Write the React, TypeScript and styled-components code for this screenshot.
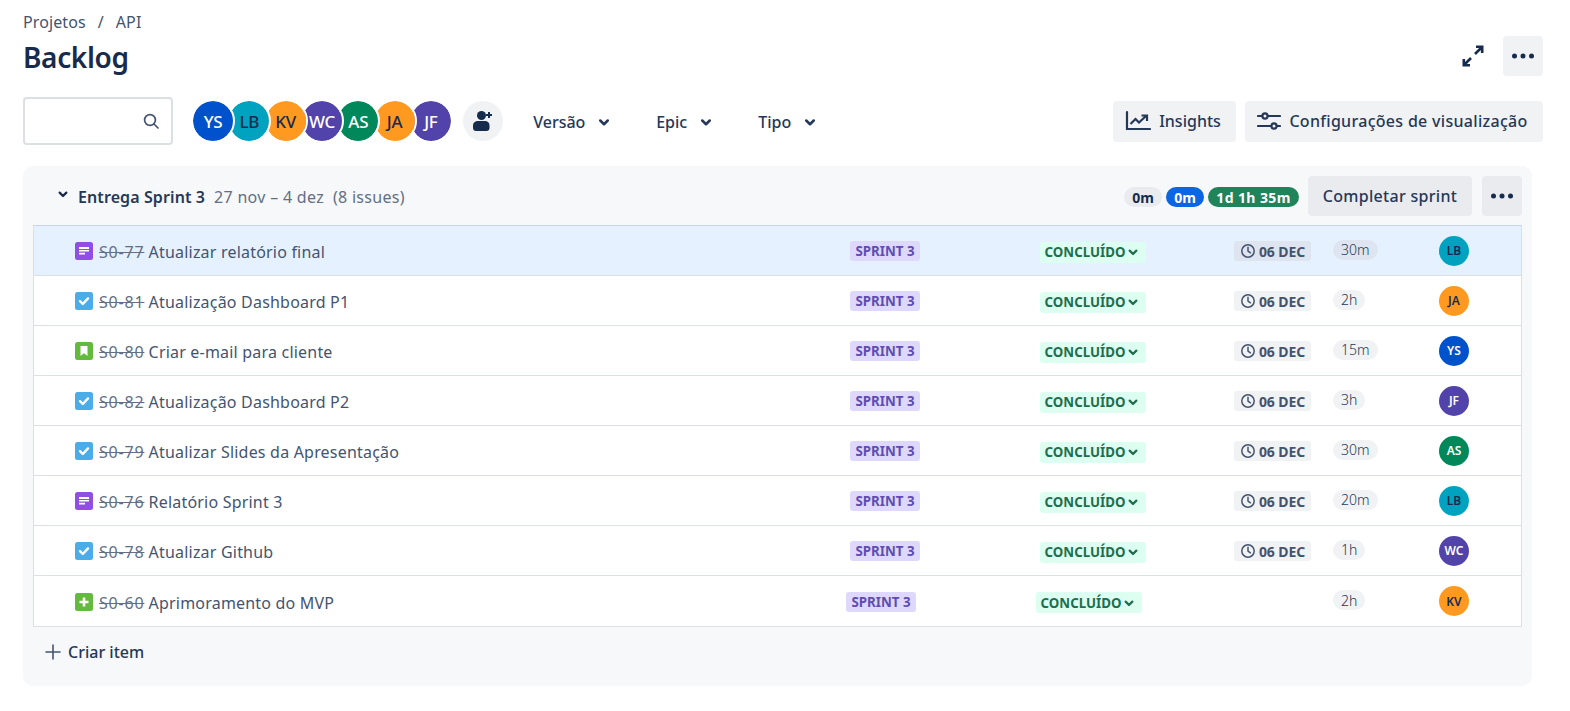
import React from 'react';
import styled, { createGlobalStyle } from 'styled-components';

const Global = createGlobalStyle`
  html, body { margin: 0; padding: 0; background: #fff; }
  body { font-family: "Noto Sans", "Open Sans", "Liberation Sans", sans-serif; color: #172b4d; }
  * { box-sizing: border-box; }
`;

const Page = styled.div`
  width: 1570px; height: 711px; padding: 12px 27px 0 23px; overflow: hidden;
`;
const Crumbs = styled.div`
  display: flex; gap: 12px; height: 20px; align-items: center;
  font-size: 16px; line-height: 20px; letter-spacing: 0.1px; color: #44546f;
`;
const TitleRow = styled.div`
  display: flex; align-items: center; justify-content: space-between; height: 40px; margin-top: 4px;
`;
const Title = styled.h1`
  margin: 1px 0 0; font-size: 28px; font-weight: 600; line-height: 40px; letter-spacing: -0.35px; color: #172b4d;
`;
const TitleActions = styled.div`
  display: flex; align-items: center; gap: 15px;
`;
const PlainIcon = styled.div`
  width: 30px; height: 40px; display: flex; align-items: center; justify-content: center;
`;
const SquareButton = styled.button<{ $dark?: boolean }>`
  width: 40px; height: 40px; border: 0; border-radius: 4px; padding: 0;
  background: ${p => (p.$dark ? '#e9ebef' : '#f1f2f4')};
  display: flex; align-items: center; justify-content: center;
`;
const Toolbar = styled.div`
  display: flex; align-items: center; height: 48px; margin-top: 21px;
`;
const Search = styled.div`
  width: 150px; height: 48px; border: 2px solid #dcdfe4; border-radius: 4px;
  display: flex; align-items: center; justify-content: flex-end; padding-right: 11px; background: #fff;
`;
const Faces = styled.div`
  display: flex; margin-left: 18px;
`;
const Face = styled.div<{ $bg: string; $fg: string; $z: number }>`
  position: relative; z-index: ${p => p.$z};
  width: 44px; height: 44px; flex: none; border-radius: 50%; border: 2px solid #fff; margin-right: -7.7px;
  background: ${p => p.$bg}; background-clip: padding-box; color: ${p => p.$fg};
  display: flex; align-items: center; justify-content: center;
  font-size: 17px; font-weight: 500; letter-spacing: -0.3px;
`;
const AddUser = styled.div`
  width: 40px; height: 40px; border-radius: 50%; background: #f1f2f4; margin-left: 18px;
  display: flex; align-items: center; justify-content: center;
`;
const Filter = styled.div<{ $w: number }>`
  width: ${p => p.$w}px; display: flex; align-items: center; gap: 10px; padding-top: 2px;
  font-size: 16px; font-weight: 500; color: #253858;
`;
const Filters = styled.div`
  display: flex; margin-left: 30px;
`;
const ToolbarEnd = styled.div`
  margin-left: auto; display: flex; gap: 9px;
`;
const TextButton = styled.button<{ $w: number; $spread?: boolean }>`
  width: ${p => p.$w}px; height: 41px; border: 0; border-radius: 4px; background: #f1f2f4;
  display: flex; align-items: center; justify-content: center; gap: 8px; padding: 0 3px 0 0;
  font-family: inherit; font-size: 16px; font-weight: 500; color: #253858; white-space: nowrap;
  letter-spacing: ${p => (p.$spread ? '0.3px' : '0')};
`;
const Sprint = styled.section`
  width: 1509px; height: 520px; margin-top: 21px; background: #f7f8f9; border-radius: 10px;
  padding: 0 10px;
`;
const SprintHead = styled.div`
  height: 59px; display: flex; align-items: center; padding-left: 22px;
`;
const HeadChevron = styled.span`
  display: flex; margin-top: -4px; color: #172b4d;
`;
const SprintName = styled.span`
  font-size: 16px; font-weight: 600; color: #253858; margin: 2px 0 0 7px; letter-spacing: 0.1px;
`;
const SprintMeta = styled.span`
  font-size: 16px; color: #626f86; margin: 2px 0 0 9px; white-space: pre; letter-spacing: 0.3px;
`;
const HeadEnd = styled.div`
  margin-left: auto; display: flex; align-items: center; gap: 10px;
`;
const Pills = styled.div`
  display: flex; gap: 4px; align-items: center; padding-top: 3px; margin-right: -1px;
`;
const Pill = styled.span<{ $bg: string; $fg: string; $wide?: boolean }>`
  height: 20px; min-width: 38px; width: ${p => (p.$wide ? '91px' : '38px')}; border-radius: 10px; background: ${p => p.$bg}; color: ${p => p.$fg};
  display: flex; align-items: center; justify-content: center;
  font-size: 14px; font-weight: 700; white-space: nowrap; letter-spacing: ${p => (p.$wide ? '0.4px' : '0')};
`;
const CompleteButton = styled.button`
  width: 164px; height: 40px; border: 0; border-radius: 4px; background: #e9ebef; padding: 0;
  font-family: inherit; font-size: 16px; font-weight: 500; color: #253858; letter-spacing: 0.3px;
`;
const Table = styled.div`
  border: 1px solid #dcdfe4; border-top-color: #c9d5e6; background: #fff;
`;
const Row = styled.div<{ $active?: boolean }>`
  height: 50px;
  display: grid; align-items: center;
  grid-template-columns: 775px 190px 194px 99px 106px 30px;
  padding-left: 41px;
  background: ${p => (p.$active ? '#e6f1ff' : '#fff')};
  border-bottom: 1px solid #dcdfe4;
  &:last-child { border-bottom: 0; }
`;
const Summary = styled.div`
  display: flex; align-items: center; gap: 6px; font-size: 16px; color: #44546f; white-space: pre; padding-top: 1px;
`;
const SummaryText = styled.span`
  position: relative; top: 1px;
`;
const Key = styled.s`
  color: #626f86; letter-spacing: 0.8px;
`;
const Name = styled.span`
  color: #44546f; letter-spacing: 0.2px;
`;
const SprintTag = styled.span<{ $shift?: boolean }>`
  width: 70px; height: 20px; border-radius: 3px; background: #dfd8fd; color: #5e4db2; margin-top: 1px;
  display: flex; align-items: center; justify-content: center;
  font-size: 13.3px; font-weight: 700; white-space: nowrap;
  margin-left: ${p => (p.$shift ? '-4px' : '0')};
`;
const Status = styled.span<{ $shift?: boolean }>`
  width: 106px; height: 21px; margin-top: 3px; border-radius: 3px; background: #dcfff1; color: #216e4e;
  display: flex; align-items: center; justify-content: center; gap: 0;
  font-size: 13.3px; font-weight: 700; white-space: nowrap;
  margin-left: ${p => (p.$shift ? '-4px' : '0')};
`;
const DateTag = styled.span<{ $active?: boolean }>`
  width: 77px; height: 20px; margin-top: 1px; border-radius: 3px; background: ${p => (p.$active ? '#dfe5f0' : '#f1f2f4')}; color: #44546f;
  display: flex; align-items: center; justify-content: center; gap: 3px;
  font-size: 14px; font-weight: 700; white-space: nowrap; letter-spacing: -0.1px;
`;
const Estimate = styled.span<{ $active?: boolean }>`
  justify-self: start; height: 20px; padding: 0 8px; margin-top: -2px; border-radius: 10px; background: ${p => (p.$active ? '#dfe5f0' : '#f1f2f4')}; color: #253858;
  display: flex; align-items: center; font-size: 14px; font-weight: 300; white-space: nowrap;
`;
const Assignee = styled.div<{ $bg: string; $fg: string }>`
  width: 30px; height: 30px; border-radius: 50%; background: ${p => p.$bg}; color: ${p => p.$fg};
  display: flex; align-items: center; justify-content: center; font-size: 12px; font-weight: 600;
`;
const CreateItem = styled.div`
  height: 50px; display: flex; align-items: center; gap: 7px; padding-left: 12px;
  font-size: 16px; font-weight: 500; color: #253858;
`;

const Chevron = ({ size = 18 }: { size?: number }) => (
  <svg width={size} height={size} viewBox="0 0 24 24" fill="none">
    <path d="M7 10l5 5 5-5" stroke="currentColor" strokeWidth="3.4" strokeLinecap="round" strokeLinejoin="round" />
  </svg>
);
const Dots = () => (
  <svg width="24" height="24" viewBox="0 0 24 24" fill="#172b4d">
    <circle cx="3.5" cy="12" r="2.5" /><circle cx="12" cy="12" r="2.5" /><circle cx="20.5" cy="12" r="2.5" />
  </svg>
);
const Expand = () => (
  <svg width="24" height="24" viewBox="0 0 24 24" fill="none" stroke="#172b4d" strokeWidth="2.6">
    <path d="M14 10l7-7M15 2.8h6.2V9M10 14l-7 7M2.8 15v6.2H9" />
  </svg>
);
const SearchIcon = () => (
  <svg width="18" height="18" viewBox="0 0 18 18" fill="none" stroke="#44546f" strokeWidth="1.7">
    <circle cx="8" cy="8" r="5.4" /><path d="M12 12l4 4" strokeLinecap="round" />
  </svg>
);
const AddUserIcon = () => (
  <svg width="24" height="24" viewBox="0 0 24 24" fill="#172b4d">
    <circle cx="10.5" cy="6.5" r="4.5" />
    <path d="M2 16.5c0-3 2.4-4.5 5-4.5h7c2.6 0 4.5 1.5 4.5 4.5V19c0 1.7-1.3 3-3 3H5c-1.7 0-3-1.3-3-3z" />
    <path d="M18 3v6M15 6h6" stroke="#172b4d" strokeWidth="2" />
  </svg>
);
const InsightsIcon = () => (
  <svg width="26" height="22" viewBox="0 0 26 22" fill="none" stroke="#253858" strokeWidth="2.2">
    <path d="M2 2v17h23" strokeLinecap="round" />
    <path d="M5.5 14l5-5 3.5 3.5 7-6.5M16.5 5.5H22V11" />
  </svg>
);
const SlidersIcon = () => (
  <svg width="24" height="20" viewBox="0 0 24 20" fill="none" stroke="#253858" strokeWidth="2.2">
    <path d="M1 5h4M11 5h12M1 15h13M20 15h3" strokeLinecap="round" />
    <circle cx="8" cy="5" r="2.6" /><circle cx="17" cy="15" r="2.6" />
  </svg>
);
const Clock = () => (
  <svg width="16" height="16" viewBox="0 0 16 16" fill="none" stroke="#44546f" strokeWidth="1.5">
    <circle cx="8" cy="8" r="6.2" /><path d="M8 4.2V8l2.4 1.8" strokeLinecap="round" />
  </svg>
);
const Plus = () => (
  <svg width="16" height="16" viewBox="0 0 16 16" stroke="#44546f" strokeWidth="1.6" strokeLinecap="round">
    <path d="M8 1v14M1 8h14" />
  </svg>
);

type Kind = 'note' | 'task' | 'story' | 'plus';
const kindBg: Record<Kind, string> = { note: '#904ee2', task: '#4bade8', story: '#63ba3c', plus: '#63ba3c' };
const TypeIcon = ({ kind }: { kind: Kind }) => (
  <svg width="18" height="18" viewBox="0 0 18 18">
    <rect width="18" height="18" rx="2.5" fill={kindBg[kind]} />
    {kind === 'note' && <path d="M4 5h10v2H4zM4 8h10v1.6H4zM4 10.8h6v1.6H4z" fill="#fff" />}
    {kind === 'task' && <path d="M5 9.2l2.8 2.8L13 6.4" fill="none" stroke="#fff" strokeWidth="2.4" strokeLinecap="round" strokeLinejoin="round" />}
    {kind === 'story' && <path d="M5.5 4h7v10L9 11.3 5.5 14z" fill="#fff" />}
    {kind === 'plus' && <path d="M9 4.5v9M4.5 9h9" fill="none" stroke="#fff" strokeWidth="2.6" />}
  </svg>
);

const people: Record<string, { bg: string; fg: string }> = {
  YS: { bg: '#0052cc', fg: '#fff' },
  LB: { bg: '#00a3bf', fg: '#172b4d' },
  KV: { bg: '#ff991f', fg: '#172b4d' },
  WC: { bg: '#5243aa', fg: '#fff' },
  AS: { bg: '#00875a', fg: '#fff' },
  JA: { bg: '#ff991f', fg: '#172b4d' },
  JF: { bg: '#5243aa', fg: '#fff' },
};

const issues: { kind: Kind; id: string; name: string; est: string; who: string; noDate?: boolean }[] = [
  { kind: 'note', id: 'S0-77', name: 'Atualizar relatório final', est: '30m', who: 'LB' },
  { kind: 'task', id: 'S0-81', name: 'Atualização Dashboard P1', est: '2h', who: 'JA' },
  { kind: 'story', id: 'S0-80', name: 'Criar e-mail para cliente', est: '15m', who: 'YS' },
  { kind: 'task', id: 'S0-82', name: 'Atualização Dashboard P2', est: '3h', who: 'JF' },
  { kind: 'task', id: 'S0-79', name: 'Atualizar Slides da Apresentação', est: '30m', who: 'AS' },
  { kind: 'note', id: 'S0-76', name: 'Relatório Sprint 3', est: '20m', who: 'LB' },
  { kind: 'task', id: 'S0-78', name: 'Atualizar Github', est: '1h', who: 'WC' },
  { kind: 'plus', id: 'S0-60', name: 'Aprimoramento do MVP', est: '2h', who: 'KV', noDate: true },
];

export default function App() {
  return (
    <Page>
      <Global />
      <Crumbs><span>Projetos</span><span>/</span><span>API</span></Crumbs>
      <TitleRow>
        <Title>Backlog</Title>
        <TitleActions>
          <PlainIcon><Expand /></PlainIcon>
          <SquareButton><Dots /></SquareButton>
        </TitleActions>
      </TitleRow>
      <Toolbar>
        <Search><SearchIcon /></Search>
        <Faces>
          {Object.entries(people).map(([k, v], i) => <Face key={k} $bg={v.bg} $fg={v.fg} $z={10 - i}>{k}</Face>)}
        </Faces>
        <AddUser><AddUserIcon /></AddUser>
        <Filters>
          <Filter $w={123}>Versão <Chevron /></Filter>
          <Filter $w={102}>Epic <Chevron /></Filter>
          <Filter $w={80}>Tipo <Chevron /></Filter>
        </Filters>
        <ToolbarEnd>
          <TextButton $w={123}><InsightsIcon />Insights</TextButton>
          <TextButton $w={298} $spread><SlidersIcon />Configurações de visualização</TextButton>
        </ToolbarEnd>
      </Toolbar>
      <Sprint>
        <SprintHead>
          <HeadChevron><Chevron size={16} /></HeadChevron>
          <SprintName>Entrega Sprint 3</SprintName>
          <SprintMeta>27 nov – 4 dez  (8 issues)</SprintMeta>
          <HeadEnd>
            <Pills>
              <Pill $bg="#e9ebef" $fg="#172b4d">0m</Pill>
              <Pill $bg="#0c66e4" $fg="#fff">0m</Pill>
              <Pill $bg="#1f845a" $fg="#fff" $wide>1d 1h 35m</Pill>
            </Pills>
            <CompleteButton>Completar sprint</CompleteButton>
            <SquareButton $dark><Dots /></SquareButton>
          </HeadEnd>
        </SprintHead>
        <Table>
          {issues.map((it, i) => {
            const p = people[it.who];
            const active = i === 0;
            return (
              <Row key={it.id} $active={active}>
                <Summary>
                  <TypeIcon kind={it.kind} />
                  <SummaryText><Key>{it.id}</Key> <Name>{it.name}</Name></SummaryText>
                </Summary>
                <SprintTag $shift={it.noDate}>SPRINT 3</SprintTag>
                <Status $shift={it.noDate}>CONCLUÍDO<Chevron size={16} /></Status>
                {it.noDate ? <span /> : <DateTag $active={active}><Clock />06 DEC</DateTag>}
                <Estimate $active={active}>{it.est}</Estimate>
                <Assignee $bg={p.bg} $fg={p.fg}>{it.who}</Assignee>
              </Row>
            );
          })}
        </Table>
        <CreateItem><Plus />Criar item</CreateItem>
      </Sprint>
    </Page>
  );
}
